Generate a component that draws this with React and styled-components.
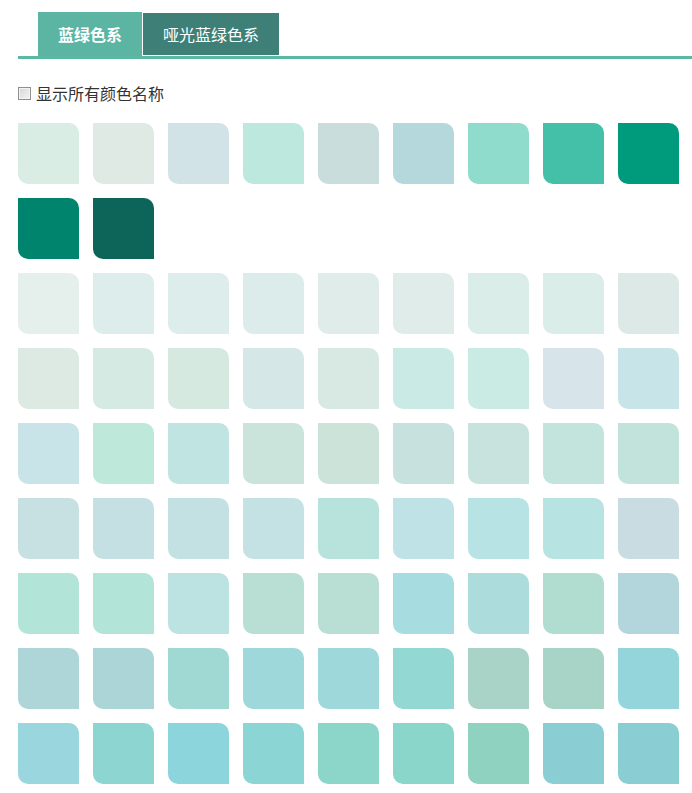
import React from 'react';
import styled, { createGlobalStyle } from 'styled-components';

const GlobalStyle = createGlobalStyle`
  html, body {
    margin: 0;
    padding: 0;
    background: #fff;
    font-family: "Noto Sans CJK SC", "Noto Sans", "Liberation Sans", sans-serif;
  }
`

const groups = [
    [
        '#d9ede4', '#e0eae5', '#d2e3e8', '#bde8dd', '#c9dddc', '#b5d8dc', '#90dccc', '#44bfa8', '#009a7c',
        '#00846e', '#0c6558',
    ],
    [
        '#e5efeb', '#dcedec', '#dcedec', '#dcecea', '#dfece9', '#dfece9', '#daede9', '#daede9', '#dde9e7',
        '#dde9e3', '#d5eae3', '#d5e9e0', '#d5e7e7', '#d8e8e2', '#caebe5', '#c9ebe4', '#d7e5ea', '#c7e4e8',
        '#c8e4e9', '#bde8da', '#bfe4e1', '#cae4db', '#cce3da', '#c7e2de', '#c8e2de', '#c3e3dd', '#c2e3dc',
        '#c7e0e2', '#c5e0e2', '#c3e1e3', '#c4e1e3', '#b8e3dd', '#bfe2e6', '#b7e3e4', '#b8e3e3', '#c9dce1',
        '#b2e5d8', '#b2e5d8', '#bde2e2', '#b9dfd4', '#b9ded3', '#a7dde0', '#acdcdb', '#b1ddd1', '#b3d6dc',
        '#aed5d8', '#acd5d8', '#a0d8d3', '#9fd8da', '#9fd8da', '#94d8d3', '#a9d3c7', '#a8d3c7', '#94d5db',
        '#99d6dd', '#8cd5d1', '#8cd5dc', '#8bd6d4', '#8bd6c9', '#8bd6ca', '#8fd2bf', '#8acdd3', '#8acdd3',
    ],
]

const App = () => {
    return (
        <Page>
            <GlobalStyle />
            <Tabs>
                <Tab active>蓝绿色系</Tab>
                <Tab>哑光蓝绿色系</Tab>
            </Tabs>
            <Options>
                <input type="checkbox" id="names" />
                <label htmlFor="names">显示所有颜色名称</label>
            </Options>
            {groups.map((colors, i) => (
                <Swatches key={i}>
                    {colors.map((c, j) => (
                        <Swatch key={j} color={c} title={c} />
                    ))}
                </Swatches>
            ))}
        </Page>
    )
}

const Page = styled.div`
    padding: 12px 0 20px 18px;
`

const Tabs = styled.ul`
    display: flex;
    align-items: flex-end;
    margin: 0;
    padding: 0 0 0 20px;
    list-style: none;
    height: 44px;
    border-bottom: 3px solid #5bb8a3;
`

const Tab = styled.li`
    padding: 0 20px;
    color: #fff;
    font-size: 16px;
    cursor: pointer;
    height: ${p => (p.active ? '44px' : '42px')};
    line-height: ${p => (p.active ? '44px' : '42px')};
    margin: ${p => (p.active ? '0' : '0 0 1px 1px')};
    font-weight: ${p => (p.active ? 'bold' : 'normal')};
    background: ${p => (p.active ? '#5bb5a2' : '#3e8078')};
`

const Options = styled.div`
    display: flex;
    align-items: center;
    height: 20px;
    margin: 24px 0 20px;
    font-size: 16px;
    color: #333;
    input {
        appearance: none;
        box-sizing: border-box;
        width: 13px;
        height: 13px;
        margin: 0 5px 0 0;
        border: 1px solid #8e8f8f;
        background: linear-gradient(135deg, #d6d6d6, #f4f4f4);
        box-shadow: inset 0 0 0 1px #f4f4f4;
    }
    input:checked {
        background: #5bb5a2;
    }
`

const Swatches = styled.div`
    display: grid;
    grid-template-columns: repeat(9, 61px);
    gap: 14px;
    margin-bottom: 14px;
`

const Swatch = styled.div`
    width: 61px;
    height: 61px;
    background: ${p => p.color};
    border-radius: 0 10px 0 10px;
`

export default App
